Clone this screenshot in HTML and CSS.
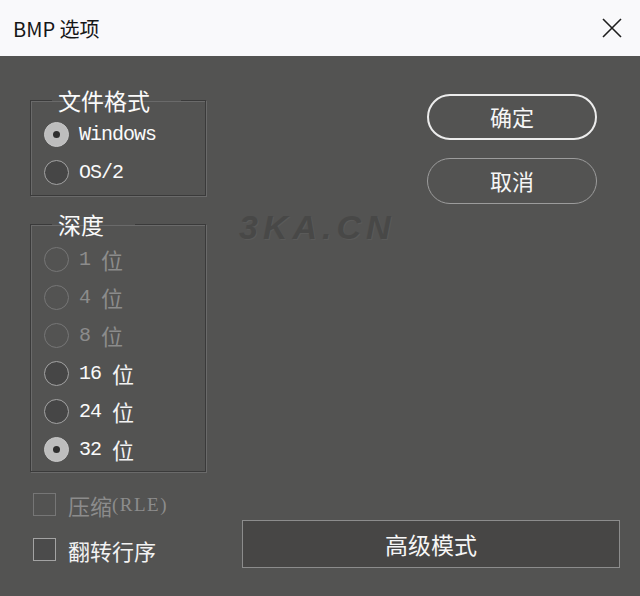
FILE: index.html
```html
<!DOCTYPE html>
<html lang="zh-CN">
<head>
  <meta charset="UTF-8">
  <meta name="viewport" content="width=device-width, initial-scale=1.0">
  <title>BMP 选项</title>
  <link rel="stylesheet" href="styles.css">
</head>
<body>
  <div class="dialog">
    <div class="titlebar">
      <span class="title">BMP 选项</span>
      <button class="close-btn" aria-label="关闭">
        <svg width="20" height="20" viewBox="0 0 20 20">
          <path d="M1 1 L19 19 M19 1 L1 19" stroke="#1e1e1e" stroke-width="1.6" fill="none"/>
        </svg>
      </button>
    </div>

    <div class="content">
      <div class="top">
        <div class="groups">
          <fieldset class="group">
            <legend>文件格式</legend>
            <label class="option"><span class="radio checked"></span><span class="mono">Windows</span></label>
            <label class="option"><span class="radio"></span><span class="mono">OS/2</span></label>
          </fieldset>

          <fieldset class="group depth">
            <legend>深度</legend>
            <label class="option disabled"><span class="radio"></span><span class="mono">1 </span>位</label>
            <label class="option disabled"><span class="radio"></span><span class="mono">4 </span>位</label>
            <label class="option disabled"><span class="radio"></span><span class="mono">8 </span>位</label>
            <label class="option"><span class="radio"></span><span class="mono">16 </span>位</label>
            <label class="option"><span class="radio"></span><span class="mono">24 </span>位</label>
            <label class="option"><span class="radio checked"></span><span class="mono">32 </span>位</label>
          </fieldset>
        </div>

        <div class="actions">
          <button class="pill-btn primary">确定</button>
          <button class="pill-btn">取消</button>
        </div>
      </div>

      <div class="bottom">
        <div class="checks">
          <label class="check disabled"><span class="box"></span>压缩<span class="mono serif">(RLE)</span></label>
          <label class="check"><span class="box"></span>翻转行序</label>
        </div>
        <button class="advanced-btn">高级模式</button>
      </div>
    </div>

    <div class="watermark">3KA.CN</div>
  </div>
</body>
</html>
```

FILE: styles.css
```css
:root {
  --bg: #535352;
  --text: #f2f2f2;
  --muted: #8c8c8c;
  --edge-dark: #3a3a3a;
  --edge-light: #6a6a6a;
}
html, body {
  margin: 0;
  height: 100%;
}
body {
  background: var(--bg);
  font-family: 'Noto Sans CJK SC', 'Noto Sans', sans-serif;
  color: var(--text);
}
.dialog {
  position: relative;
  width: 640px;
  height: 596px;
  overflow: hidden;
}
.titlebar {
  height: 56px;
  background: #f9f9fb;
  display: flex;
  align-items: center;
  justify-content: space-between;
  padding: 0 18px 0 13px;
}
.title {
  font-size: 20px;
  color: #161616;
}
.close-btn {
  background: none;
  border: none;
  padding: 0;
  display: flex;
}
.content {
  padding: 0 20px 0 30px;
  display: flex;
  flex-direction: column;
}
.top {
  display: flex;
}
.groups {
  width: 176px;
  display: flex;
  flex-direction: column;
  gap: 16px;
  padding-top: 32px;
}
.group {
  margin: 0;
  padding: 3px 0 4px 13px;
  border: 1px solid var(--edge-dark);
  box-shadow: inset 1px 1px 0 var(--edge-light), 1px 1px 0 var(--edge-light);
  min-width: 0;
}
.group legend {
  font-size: 23px;
  line-height: 24px;
  padding: 0 31px 0 6px;
  margin-left: 8px;
  color: #fafafa;
}
.depth {
  padding-top: 4px;
  padding-bottom: 3px;
}
.option {
  display: flex;
  align-items: center;
  height: 38px;
  font-size: 22px;
}
.mono {
  font-family: 'Liberation Mono', 'Noto Sans CJK SC', monospace;
  font-size: 20px;
  letter-spacing: -1px;
  white-space: pre;
  color: #fafafa;
}
.serif {
  font-family: 'Liberation Serif', serif;
  font-size: 19px;
  letter-spacing: 1.5px;
}
.radio {
  width: 25px;
  height: 25px;
  box-sizing: border-box;
  border-radius: 50%;
  border: 1.5px solid #a3a3a3;
  background: #464646;
  margin-right: 10px;
  position: relative;
  flex: none;
}
.radio.checked {
  background: #bdbdbd;
  border-color: #c8c8c8;
}
.radio.checked::after {
  content: '';
  position: absolute;
  left: 50%;
  top: 50%;
  width: 7px;
  height: 7px;
  margin: -3.5px 0 0 -3.5px;
  border-radius: 50%;
  background: #2e2e2e;
}
.option.disabled,
.option.disabled .mono {
  color: var(--muted);
}
.option.disabled .radio {
  border-color: #767676;
  background: transparent;
}
.actions {
  margin-left: 221px;
  padding-top: 38px;
  display: flex;
  flex-direction: column;
  gap: 18px;
}
.pill-btn {
  width: 170px;
  height: 46px;
  border-radius: 23px;
  background: transparent;
  border: 1.5px solid #9c9c9c;
  color: #f6f6f6;
  font-family: inherit;
  font-size: 22px;
  line-height: 1;
  padding: 0 0 3px;
}
.pill-btn.primary {
  border: 2px solid #ececec;
}
.bottom {
  display: flex;
  margin-top: 10px;
}
.checks {
  display: flex;
  flex-direction: column;
  padding-left: 3px;
}
.check {
  display: flex;
  align-items: center;
  height: 45px;
  font-size: 22px;
}
.box {
  width: 23px;
  height: 23px;
  box-sizing: border-box;
  border: 1.5px solid #a3a3a3;
  background: #4b4b4b;
  margin-right: 12px;
  flex: none;
}
.check.disabled,
.check.disabled .mono {
  color: var(--muted);
}
.check.disabled .box {
  border-color: #767676;
  background: transparent;
}
.advanced-btn {
  margin-left: auto;
  align-self: flex-end;
  margin-bottom: 4px;
  width: 378px;
  height: 48px;
  background: #474645;
  border: 1px solid #8c8c8c;
  color: #f6f6f6;
  font-family: inherit;
  font-size: 23px;
  padding: 0;
}
.watermark {
  position: absolute;
  left: 239px;
  top: 208px;
  font-family: 'Liberation Sans', Arial, sans-serif;
  font-weight: 700;
  font-style: italic;
  font-size: 34px;
  letter-spacing: 5px;
  color: #484847;
  text-shadow: 1px 1px 0 #5a5a59;
}
```
